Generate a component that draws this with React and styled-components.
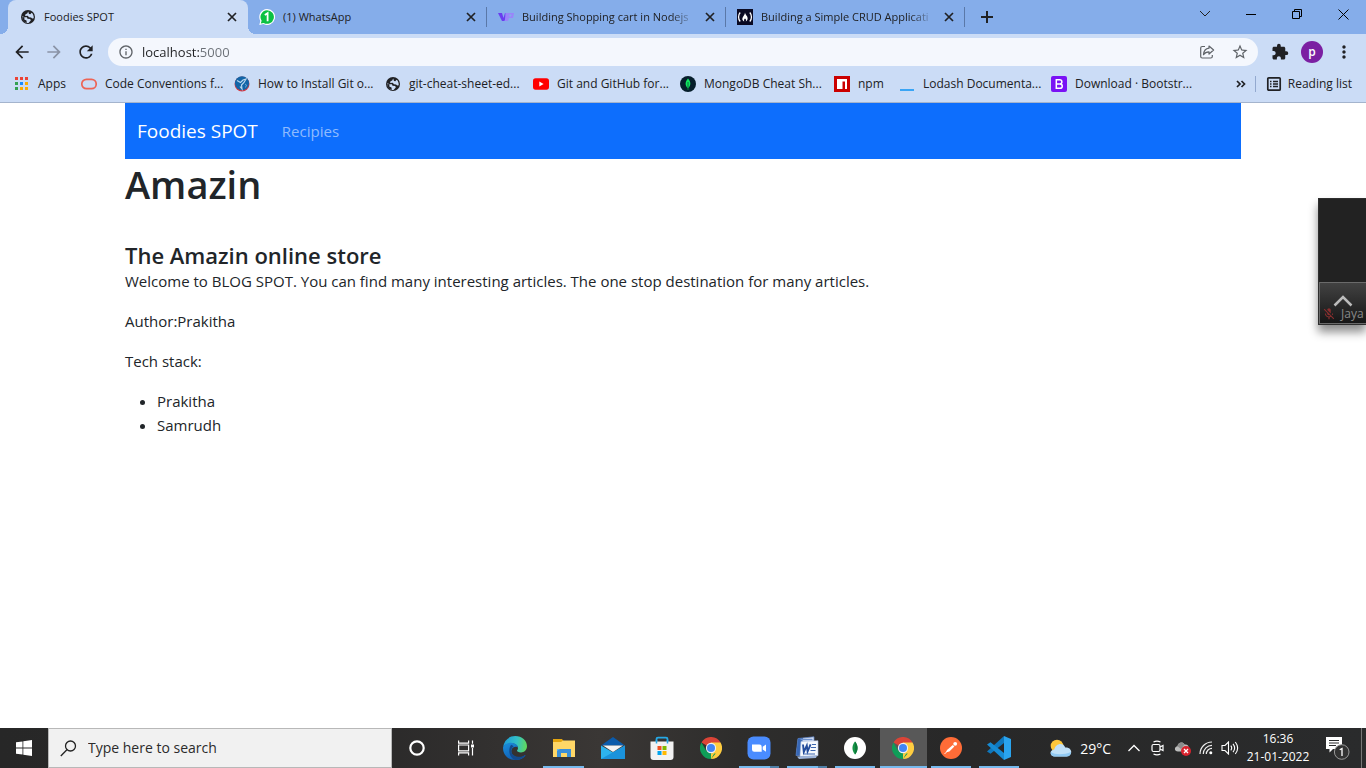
import React from "react";
import styled, { createGlobalStyle, css } from "styled-components";
import {
  MdArrowBack,
  MdArrowForward,
  MdRefresh,
  MdInfoOutline,
  MdStarBorder,
  MdExtension,
  MdMoreVert,
  MdMicOff,
} from "react-icons/md";

const GlobalStyle = createGlobalStyle`
  *, *::before, *::after { box-sizing: border-box; }
  body { margin: 0; background: #fff; font-family: "Open Sans", "Noto Sans", sans-serif; }
  button { border: 0; padding: 0; margin: 0; background: none; font: inherit; color: inherit; cursor: pointer; }
  a { color: inherit; text-decoration: none; }
  svg { display: block; flex: none; }
`;

const Screen = styled.div`
  display: flex;
  flex-direction: column;
  min-height: 100vh;
`;

/* ---------- Browser frame ---------- */

const BrowserFrame = styled.header`
  background: #cbdcf6;
  color: #202124;
  border-bottom: 1px solid #a4b4cd;
`;

const TabStrip = styled.div`
  display: flex;
  height: 34px;
  padding-left: 8px;
  background: #85adea;
`;

const Tab = styled.div`
  position: relative;
  display: flex;
  align-items: center;
  gap: 8px;
  flex: 0 1 239px;
  min-width: 0;
  height: 34px;
  padding: 0 9px 0 11px;
  line-height: 16px;

  &::after {
    content: "";
    position: absolute;
    right: 0;
    top: 7px;
    width: 1px;
    height: 20px;
    background: #5a78a8;
  }

  ${(p) =>
    p.$active &&
    css`
      background: #cbdcf6;
      border-radius: 8px 8px 0 0;
      flex-basis: 240px;
      padding-left: 12px;

      &::before,
      &::after {
        content: "";
        position: absolute;
        top: auto;
        bottom: 0;
        width: 8px;
        height: 8px;
      }
      &::before {
        left: -8px;
        background: radial-gradient(circle at 0 0, #85adea 8px, #cbdcf6 8px);
      }
      &::after {
        right: -8px;
        background: radial-gradient(circle at 100% 0, #85adea 8px, #cbdcf6 8px);
      }
    `}
`;

const TabTitle = styled.a`
  flex: 1;
  min-width: 0;
  overflow: hidden;
  white-space: nowrap;
  font-size: 11px;
  ${(p) =>
    p.$fade &&
    css`
      mask-image: linear-gradient(to right, #000 calc(100% - 24px), transparent);
    `}
`;

const TabClose = styled.button`
  display: grid;
  place-items: center;
  width: 14px;
  height: 16px;
`;

const NewTab = styled.button`
  display: grid;
  place-items: center;
  width: 44px;
  height: 34px;
`;

const WindowControls = styled.div`
  display: flex;
  margin-left: auto;
`;

const WindowButton = styled.button`
  display: grid;
  place-items: center;
  width: 46px;
  height: 28px;
`;

const Toolbar = styled.div`
  display: flex;
  align-items: center;
  height: 36px;
  padding: 0 6px;
`;

const ToolButton = styled.button`
  display: grid;
  place-items: center;
  width: 32px;
  height: 32px;
  color: ${(p) => (p.$muted ? "#8a93a6" : "#202124")};
`;

const AddressBar = styled.label`
  display: flex;
  align-items: center;
  flex: 1;
  min-width: 0;
  height: 28px;
  margin: 0 6px;
  padding: 0 9px 0 10px;
  gap: 8px;
  border-radius: 14px;
  background: #f4f7fd;
  color: #5f6368;
`;

const AddressInput = styled.input`
  flex: 1;
  min-width: 0;
  height: 20px;
  padding: 0;
  border: 0;
  outline: 0;
  font: 13px/20px "Open Sans", "Noto Sans", sans-serif;
  color: transparent;
  background: linear-gradient(to right, #202124 58px, #6a6f76 58px);
  background-clip: text;
  -webkit-background-clip: text;
`;

const Avatar = styled.button`
  width: 22px;
  height: 22px;
  margin: 0 5px;
  border-radius: 50%;
  background: #7b1fa2;
  color: #fff;
  font-size: 12px;
  font-weight: 600;
  line-height: 18px;
`;

const BookmarksBar = styled.nav`
  display: flex;
  align-items: center;
  height: 32px;
  padding: 0 14px 4px;
  font-size: 12px;
  line-height: 16px;
`;

const Bookmark = styled.a`
  display: flex;
  align-items: center;
  gap: 8px;
  flex: 0 0 ${(p) => p.$width}px;
  white-space: nowrap;
`;

const BookmarksEnd = styled.div`
  display: flex;
  align-items: center;
  margin-left: auto;
`;

const MoreBookmarks = styled.button`
  display: grid;
  place-items: center;
  width: 16px;
  height: 16px;
`;

const ReadingList = styled.button`
  display: flex;
  align-items: center;
  gap: 6px;
  height: 16px;
  margin-left: 6px;
  padding-left: 10px;
  border-left: 1px solid #93a9cf;
`;

/* ---------- Web page ---------- */

const Page = styled.main`
  flex: 1;
  background: #fff;
  color: #212529;
  font-size: 15px;
  line-height: 24px;
`;

const Container = styled.div`
  max-width: 1140px;
  margin: 0 auto;
  padding: 0 12px;
`;

const SiteNav = styled.nav`
  display: flex;
  align-items: center;
  gap: 24px;
  height: 56px;
  padding: 0 12px;
  background: #0d6efd;
`;

const Brand = styled.a`
  color: #fff;
  font-size: 19px;
`;

const NavLink = styled.a`
  color: rgba(255, 255, 255, 0.55);
  font-size: 15px;
`;

const Title = styled.h1`
  margin: 0 0 32px;
  font-size: 38px;
  line-height: 50px;
  font-weight: 600;
`;

const Subtitle = styled.h2`
  margin: 0;
  font-size: 22px;
  line-height: 28px;
  font-weight: 600;
`;

const Paragraph = styled.p`
  margin: 0 0 16px;
`;

const StackList = styled.ul`
  margin: 0;
  padding-left: 32px;
`;

/* ---------- Floating call window ---------- */

const CallWindow = styled.aside`
  position: absolute;
  top: 198px;
  right: 0;
  width: 48px;
  height: 127px;
  display: flex;
  flex-direction: column;
  justify-content: flex-end;
  background: #222;
  border: 1px solid #2e2e2e;
  border-right: 0;
  box-shadow: 0 7px 9px rgba(0, 0, 0, 0.45);
`;

const CallBar = styled.button`
  display: flex;
  flex-direction: column;
  align-items: center;
  height: 42px;
  padding-top: 12px;
  border: 1px solid #6a6a6a;
  border-right: 0;
  background: linear-gradient(#424242, #161616);
  overflow: hidden;
`;

const CallName = styled.span`
  display: flex;
  align-items: center;
  align-self: flex-start;
  gap: 5px;
  padding-left: 2px;
  color: #888;
  font-size: 12px;
  line-height: 14px;
`;

/* ---------- Taskbar ---------- */

const Taskbar = styled.footer`
  display: flex;
  height: 40px;
  color: #fff;
  background: linear-gradient(to right, #272727 0, #2b2a2a 28%, #3a3735 44%, #2e2d2c 54%, #282828 70%, #2a2b2c 100%);
`;

const TaskButton = styled.button`
  position: relative;
  display: grid;
  place-items: center;
  flex: none;
  width: ${(p) => p.$width || 48}px;
  height: 40px;

  ${(p) =>
    p.$active &&
    css`
      background: #585858;
      box-shadow: inset 1px 0 #2a2a2a;
    `}

  ${(p) =>
    p.$open &&
    css`
      &::after {
        content: "";
        position: absolute;
        bottom: 0;
        left: ${p.$active ? 1 : 4}px;
        right: ${p.$active ? 0 : 4}px;
        height: 2px;
        background: ${p.$multi ? "linear-gradient(to right, #76b9ed 31px, #4f7fa6 31px)" : "#76b9ed"};
      }
    `}
`;

const SearchBox = styled.label`
  display: flex;
  align-items: center;
  gap: 11px;
  flex: 0 1 344px;
  min-width: 120px;
  padding: 0 11px;
  background: #f1f1f1;
  border: 1px solid #b8b8b8;
  color: #222;
`;

const SearchInput = styled.input`
  flex: 1;
  min-width: 0;
  padding: 0;
  border: 0;
  outline: 0;
  background: none;
  font: 14px/20px "Open Sans", "Noto Sans", sans-serif;
  color: #222;

  &::placeholder {
    color: #2b2b2b;
    opacity: 1;
  }
`;

const Tray = styled.div`
  display: flex;
  align-items: center;
  margin-left: auto;
  padding-right: 4px;
`;

const Weather = styled.button`
  display: flex;
  align-items: center;
  gap: 8px;
  margin-right: 11px;
  font-size: 14px;
`;

const TrayButton = styled.button`
  display: grid;
  place-items: center;
  width: 24px;
  height: 40px;
`;

const Clock = styled.time`
  width: 72px;
  font-size: 12px;
  line-height: 18px;
  text-align: center;
  white-space: nowrap;
`;

const Notifications = styled.button`
  display: grid;
  place-items: center;
  width: 48px;
  height: 40px;
  border-right: 1px solid #777;
`;

/* ---------- Drawings ---------- */

const Globe = () => (
  <svg width="16" height="16" viewBox="0 0 16 16">
    <circle cx="8" cy="8" r="7" fill="#202124" />
    <path d="M2.300 7.200L4.700 8.300h2.200l.6 1.500 2.700.2.600 1.500-2.300 2.600C4.700 14.200 2.200 11.200 2.300 7.200z" fill="#cbdcf6" />
    <path d="M4.500 8.300l-.2 2.200 2.200 1 .3 2.500C3.600 13.300 2 10.600 2.300 8z" fill="#202124" />
    <path d="M8.200 2.400L7.200 4.500l-1.700.8-.4 1.700 2.600-.2 1.300 1.400 2 .2 1.300 1 1.400-.2C13.900 7 13.200 5 11.700 3.700L10.300 5.200 9 5z" fill="#cbdcf6" />
  </svg>
);

const Cross = () => (
  <svg width="10" height="10" viewBox="0 0 10 10" stroke="#202124" strokeWidth="1.7">
    <path d="M1 1l8 8M9 1L1 9" />
  </svg>
);

const WhatsApp = () => (
  <svg width="16" height="16" viewBox="0 0 16 16">
    <path d="M8 0a8 8 0 1 1-3.6 15.1L.3 16l1-4A8 8 0 0 1 8 0z" fill="#fff" />
    <path d="M8 1.2a6.8 6.8 0 1 1-3.3 12.7l-2.9.7.8-2.9A6.8 6.8 0 0 1 8 1.2z" fill="#0bc143" />
    <path d="M5.8 5.900l2.800-1.700v8" fill="none" stroke="#fff" strokeWidth="1.800" />
  </svg>
);

const VpLogo = () => (
  <svg width="16" height="16" viewBox="0 0 16 16">
    <path d="M0 4h4l1.500 5L7 4h2.600L6.400 12H4z" fill="#6a3df0" />
    <path d="M7.400 4h8.600l-1 5h-4l-1 3H7z" fill="#9a84fa" />
    <path d="M11.600 5.600h2l-.5 1.800h-2z" fill="#85adea" />
  </svg>
);

const CodeCamp = () => (
  <svg width="16" height="16" viewBox="0 0 16 16">
    <path d="M0 0h16v16H0z" fill="#0a0a23" />
    <path d="M3.200 3.500C1 6 1 10 3.200 12.500M12.800 3.500C15 6 15 10 12.800 12.500" fill="none" stroke="#fff" strokeWidth="1.300" />
    <path d="M8 3.600c.4 2.600 3 3.600 2.600 6.400-.2 1.300-1 2-1.800 2.400.5-1.300.2-2.200-.8-3-.9.800-1.200 1.700-.8 3C6 12 5.200 11 5.300 9.800 5.500 7.500 8 6.500 8 3.600z" fill="#fff" />
  </svg>
);

const AppsGrid = () => (
  <svg width="16" height="16" viewBox="0 0 16 16">
    {["#ea4335", "#ea4335", "#ea4335", "#34a053", "#1a8cff", "#fbac05", "#34a053", "#fbac05", "#fbac05"].map((c, i) => (
      <rect key={i} x={1 + (i % 3) * 5} y={1 + Math.floor(i / 3) * 5} width="3" height="3" fill={c} />
    ))}
  </svg>
);

const OracleRing = () => (
  <svg width="16" height="16" viewBox="0 0 16 16">
    <rect x="0.800" y="3.300" width="14.400" height="9.400" rx="4.700" fill="none" stroke="#ed6455" strokeWidth="1.700" />
  </svg>
);

const BlueGlobe = () => (
  <svg width="16" height="16" viewBox="0 0 16 16">
    <circle cx="8" cy="8" r="7.500" fill="#d33b45" />
    <circle cx="8" cy="7.300" r="7" fill="#1265a8" />
    <path d="M3 4.500l3.500 2L9 4l3-1-2 3.500L7.500 9l.5 4-2-2.500" fill="none" stroke="#b9d6ee" strokeWidth="1.200" />
    <path d="M11 8l1.500 1-1 2.500" fill="none" stroke="#6fa6d2" />
  </svg>
);

const YouTube = () => (
  <svg width="16" height="16" viewBox="0 0 16 16">
    <rect y="2.300" width="16" height="11.400" rx="2.600" fill="#f00" />
    <path d="M6.300 5.500v5L10.600 8z" fill="#fff" />
  </svg>
);

const MongoDark = () => (
  <svg width="16" height="16" viewBox="0 0 16 16">
    <circle cx="8" cy="8" r="8" fill="#061e2b" />
    <path d="M8 2.600c3 3.400 3.300 6.800 0 10-3.300-3.200-3-6.600 0-10z" fill="#10e660" />
    <path d="M8 6v8" stroke="#08713c" strokeWidth="1" />
  </svg>
);

const Npm = () => (
  <svg width="16" height="16" viewBox="0 0 16 16">
    <path d="M0 0h16v16H0z" fill="#cb0000" />
    <path d="M3 3h10v10h-2V5.500H8.500V13H3z" fill="#fff" />
  </svg>
);

const Lodash = () => (
  <svg width="16" height="16" viewBox="0 0 16 16">
    <path d="M1 13h14v2H1z" fill="#3aa5f5" />
  </svg>
);

const Bootstrap = () => (
  <svg width="16" height="16" viewBox="0 0 16 16">
    <rect width="16" height="16" rx="2" fill="#7a12f5" />
    <path d="M5.300 3.700h3.300c3 0 3 4 .3 4.200 3.300.2 3.100 4.400-.1 4.400H5.300zM5.300 7.900h3.500" fill="none" stroke="#fff" strokeWidth="1.500" />
  </svg>
);

const ShareIcon = () => (
  <svg width="16" height="16" viewBox="0 0 16 16" fill="none" stroke="#5f6368" strokeWidth="1.200" strokeLinejoin="round">
    <path d="M6 2.500H3.200Q1.700 2.500 1.700 4v8.500Q1.700 14 3.200 14h8.600q1.500 0 1.500-1.500V11" />
    <path d="M10 2l4.600 4L10 10V7.800C7.500 7.800 5.700 8.700 4.500 10.700 4.800 7 6.800 4.600 10 4.200z" />
  </svg>
);

const ReadingIcon = () => (
  <svg width="16" height="16" viewBox="0 0 16 16" fill="none" stroke="#202124">
    <rect x="1.800" y="1.800" width="12.400" height="12.400" rx="1" strokeWidth="1.700" />
    <path d="M4 5.500h1.500M4 8h1.500M4 10.500h1.500M7 5.500h5M7 8h5M7 10.500h5" strokeWidth="1.300" />
  </svg>
);

const WindowsLogo = () => (
  <svg width="16" height="16" viewBox="0 0 16 16" fill="#fff">
    <path d="M0 2.300L6.500 1.400v6.100H0zM7.300 1.300L16 0v7.500H7.300zM0 8.400h6.500v6.200L0 13.700zM7.300 8.400H16V16l-8.700-1.300z" />
  </svg>
);

const SearchIcon = () => (
  <svg width="17" height="17" viewBox="0 0 17 17" fill="none" stroke="#222" strokeWidth="1.300">
    <circle cx="10.500" cy="6" r="5" />
    <path d="M6.900 9.700L.8 16" />
  </svg>
);

const CortanaRing = () => (
  <svg width="16" height="16" viewBox="0 0 16 16">
    <circle cx="8" cy="8" r="6.700" fill="none" stroke="#fff" strokeWidth="2.200" />
  </svg>
);

const TaskView = () => (
  <svg width="16" height="16" viewBox="0 0 16 16" fill="none" stroke="#fff" strokeWidth="1.200">
    <path d="M.6.500v2.600h10V.500M.6 15.500v-2.600h10v2.600M.6 5h10v5.800H.6zM14.500.500v3.300M14.500 8v7.500" />
    <path d="M13 4.500h3v3h-3z" fill="#fff" stroke="none" />
  </svg>
);

const Edge = () => (
  <svg width="24" height="24" viewBox="0 0 24 24">
    <defs>
      <linearGradient id="edgeTop" x1="0" y1="0.500" x2="1" y2="0.600">
        <stop offset="0" stopColor="#1e9bd8" />
        <stop offset="0.550" stopColor="#33c1c8" />
        <stop offset="1" stopColor="#62d957" />
      </linearGradient>
      <linearGradient id="edgeLow" x1="0" y1="0" x2="0.500" y2="1">
        <stop offset="0" stopColor="#1b8fdb" />
        <stop offset="1" stopColor="#0f5eb5" />
      </linearGradient>
    </defs>
    <path d="M.1 11C1 4.500 6 0 12.200 0 19 0 24 4.800 24 10.300c0 3.700-2.800 6.100-6 6.100-2.500 0-4-.9-4-1.600 0-.6 1-1 1-2.800 0-2.500-2.700-4.700-6.400-4.700C4.500 7.300 1 9 .1 11z" fill="url(#edgeTop)" />
    <path d="M.1 11c1.200-2.700 4.500-4.400 8-4.300 3.700.1 6.700 2.200 6.900 5-1.200-1.700-5.500-1.500-6.500 2.300-.9 3.700 2.500 7.500 7.200 7.300 2.700-.1 4.600-1 6-2.100.4-.3.900.1.600.5A12 12 0 0 1 12 24C5 24-.6 18 .1 11z" fill="url(#edgeLow)" />
    <path d="M8.300 8.700C5.500 11.500 4.700 20.500 12 24c4 .1 7.800-1.500 10.200-4.500-5 2.800-14 1.300-13.900-4.800 0-1.800.8-3.100 2.300-4.200-.5-.9-1.300-1.500-2.300-1.800z" fill="#134a8c" />
  </svg>
);

const Explorer = () => (
  <svg width="24" height="24" viewBox="0 0 24 24">
    <path d="M1 3h9l1.500 2H23v3H1z" fill="#e5a50f" />
    <path d="M1 6h8l2-1.500h12V21H1z" fill="#ffd767" />
    <path d="M5 21v-8h14v8h-4v-4H9v4z" fill="#3a8fd9" />
    <path d="M9 17h6v3H9z" fill="#ffd767" />
    <path d="M5 15l3-2H5z" fill="#67b6ed" />
  </svg>
);

const Mail = () => (
  <svg width="24" height="24" viewBox="0 0 24 24">
    <path d="M0 9.500L12 1l12 8.500z" fill="#0b5bab" />
    <path d="M0 9.500l12 7 12-7V23H0z" fill="#2db4ef" />
    <path d="M0 23L24 9.500V23z" fill="#1b93dc" />
    <path d="M2 9.500h20l-10 6.500z" fill="#f3f4f5" />
  </svg>
);

const Store = () => (
  <svg width="24" height="24" viewBox="0 0 24 24">
    <path d="M6.500 7V3Q6.500 1.700 8 1.700h8q1.500 0 1.500 1.300v4" fill="none" stroke="#26a9e6" strokeWidth="1.800" />
    <path d="M.5 5.500h23V21q0 3-3 3h-17q-3 0-3-3z" fill="#f2f2f2" />
    <path d="M6.500 4v3.500M17.500 4v3.500" stroke="#26a9e6" strokeWidth="1.500" />
    <path d="M7.500 10h4v4h-4z" fill="#f25022" />
    <path d="M12.500 10h4v4h-4z" fill="#7fba00" />
    <path d="M7.500 15h4v4h-4z" fill="#00a4ef" />
    <path d="M12.500 15h4v4h-4z" fill="#ffb900" />
  </svg>
);

const Chrome = () => (
  <svg width="22" height="22" viewBox="0 0 24 24">
    <path d="M12 12L1.600 6A12 12 0 0 1 22.400 6z" fill="#db4437" />
    <path d="M12 12V6h10.400A12 12 0 0 1 12 24z" fill="#ffcd40" />
    <path d="M1.600 6l5.200 9L12 18h5.200L12 24A12 12 0 0 1 1.600 6z" fill="#0f9d58" />
    <path d="M12 18c3 0 4.500-1.500 5.200-3L12 24z" fill="#ffcd40" />
    <circle cx="12" cy="12" r="5.600" fill="#f1f1f1" />
    <circle cx="12" cy="12" r="4.400" fill="#4285f4" />
  </svg>
);

const Zoom = () => (
  <svg width="24" height="24" viewBox="0 0 24 24">
    <rect x="0.500" y="0.500" width="23" height="23" rx="6" fill="#4a8cff" />
    <path d="M5 8.500h7.500q2.200 0 2.200 2.200v5H7.200Q5 15.700 5 13.500zM15.700 10.800l3.300-2.300v7.200l-3.300-2.300z" fill="#fff" />
  </svg>
);

const Word = () => (
  <svg width="24" height="24" viewBox="0 0 24 24">
    <path d="M3 2.500L19 .8v18L1 19.500z" fill="#dfe8f7" stroke="#5b7dbd" strokeWidth="0.800" />
    <path d="M3 2.500L8 2 5 19.300l-4 .2z" fill="#3767b5" />
    <path d="M5.500 3.500h12" stroke="#6f93cf" strokeWidth="1.500" />
    <path d="M6 5.500l17-.8v15L5 20.500z" fill="#f6f9fd" stroke="#a8bbdd" strokeWidth="0.600" />
    <path d="M8 8.500l.8 7.500 3-6.500.8 6 3-7.200" fill="none" stroke="#234c9b" strokeWidth="1.900" />
    <path d="M17 8.500h4M16 11.500h5M15.500 14.500h5M9 18h11" stroke="#3c66b0" strokeWidth="1.200" />
    <path d="M2 20.500l20-1-1 2.500-17 1z" fill="#9db3d9" />
  </svg>
);

const Compass = () => (
  <svg width="22" height="22" viewBox="0 0 22 22">
    <circle cx="11" cy="11" r="11" fill="#fff" />
    <path d="M11 4.500c3.400 4.200 3.400 8.800 0 13-3.400-4.200-3.400-8.800 0-13z" fill="#159447" />
    <path d="M11 4.500c3.400 4.200 3.400 8.800 0 13z" fill="#0d7a39" />
  </svg>
);

const Postman = () => (
  <svg width="22" height="22" viewBox="0 0 22 22">
    <circle cx="11" cy="11" r="11" fill="#ff6c37" />
    <path d="M7 13l5.800-5 1.600 1.500-5 5-3.400.8z" fill="#fff" />
    <circle cx="15.200" cy="6.800" r="1.900" fill="#fff" />
    <path d="M4.500 17l4-4" stroke="#fff" strokeWidth="0.900" />
  </svg>
);

const VsCode = () => (
  <svg width="24" height="24" viewBox="0 0 24 24">
    <path d="M17 0l7 3v18l-7 3z" fill="#2aa4ee" />
    <path d="M17 0v7L3.500 17.800 0 15.500z" fill="#0f78be" />
    <path d="M17 24v-7L3.500 6.200 0 8.500z" fill="#168bd4" />
  </svg>
);

const WeatherIcon = () => (
  <svg width="22" height="18" viewBox="0 0 22 18">
    <circle cx="7" cy="7" r="6.300" fill="#fdc73a" />
    <path d="M5 17.500c-5.500 0-6-6.500-.8-7C5.500 4.500 13 2.500 15.300 8.500 23 8 23 17.500 16.500 17.500z" fill="#bfe0f7" />
    <path d="M5 17.500c-3.500 0-4.800-2.500-4-4.500 4 3 13 3 20 0 0 2.500-1.500 4.500-4.500 4.500z" fill="#90c9f2" />
  </svg>
);

const TrayChevron = () => (
  <svg width="12" height="8" viewBox="0 0 12 8" fill="none" stroke="#fff" strokeWidth="1.300">
    <path d="M.5 7L6 1.500 11.500 7" />
  </svg>
);

const MeetNow = () => (
  <svg width="14" height="16" viewBox="0 0 14 16" fill="none" stroke="#fff" strokeWidth="1.200">
    <rect x="1" y="4.500" width="8" height="7" rx="1.500" />
    <path d="M9 7l3-1.500v5L9 9M2.500 2Q6 .2 9.500 2M2.500 14Q6 15.800 9.500 14" />
  </svg>
);

const CloudError = () => (
  <svg width="17" height="16" viewBox="0 0 17 16">
    <path d="M4 11.500c-4 0-4-5-.5-5.300C4 2 9 1.500 10.500 4.500 13.500 4 15 6 14.500 8v3.500z" fill="#bcbcbc" />
    <path d="M3.500 6.200C4 2 9 1.500 10.500 4.500L7 9z" fill="#8c8c8c" />
    <circle cx="12" cy="11" r="5" fill="#d9232e" />
    <path d="M10 9l4 4M14 9l-4 4" stroke="#fff" strokeWidth="1.300" />
  </svg>
);

const Wifi = () => (
  <svg width="14" height="14" viewBox="0 0 14 14" fill="none" stroke="#eee" strokeWidth="1.200">
    <path d="M1 13A12 12 0 0 1 13 1M4.300 13A8.700 8.700 0 0 1 13 4.300M7.300 13A5.700 5.700 0 0 1 13 7.300" />
    <circle cx="11.800" cy="11.800" r="1.500" fill="#fff" stroke="none" />
  </svg>
);

const Speaker = () => (
  <svg width="18" height="14" viewBox="0 0 18 14" fill="none" stroke="#fff" strokeWidth="1.100">
    <path d="M1 4.500h3L7.500 1v12L4 9.500H1zM9.800 4.700q1.800 2.300 0 4.600M12 2.800q3.300 4.200 0 8.400M14.300 1q4.700 6 0 12" />
  </svg>
);

const Note = () => (
  <svg width="24" height="24" viewBox="0 0 24 24">
    <path d="M0 1h16v12H7l-3.500 3.500V13H0z" fill="#fff" />
    <path d="M3 4.500h10M3 7h10M3 9.500h7" stroke="#2a2b2c" strokeWidth="1" />
    <circle cx="15.700" cy="16" r="7.300" fill="#333" stroke="#999" strokeWidth="1" />
    <path d="M13.700 13.800l2.300-1.300v7.500" fill="none" stroke="#fff" strokeWidth="1.300" />
  </svg>
);

/* ---------- Content ---------- */

const tabs = [
  { title: "Foodies SPOT", Icon: Globe, active: true },
  { title: "(1) WhatsApp", Icon: WhatsApp },
  { title: "Building Shopping cart in Nodejs", Icon: VpLogo, fade: true },
  { title: "Building a Simple CRUD Applicati", Icon: CodeCamp, fade: true },
];

const bookmarks = [
  { label: "Apps", Icon: AppsGrid, width: 67 },
  { label: "Code Conventions f...", Icon: OracleRing, width: 153 },
  { label: "How to Install Git o...", Icon: BlueGlobe, width: 151 },
  { label: "git-cheat-sheet-ed...", Icon: Globe, width: 148 },
  { label: "Git and GitHub for...", Icon: YouTube, width: 147 },
  { label: "MongoDB Cheat Sh...", Icon: MongoDark, width: 154 },
  { label: "npm", Icon: Npm, width: 65 },
  { label: "Lodash Documenta...", Icon: Lodash, width: 152 },
  { label: "Download · Bootstr...", Icon: Bootstrap, width: 151 },
];

const pinned = [
  { name: "Cortana", Icon: CortanaRing },
  { name: "Task View", Icon: TaskView },
  { name: "Edge", Icon: Edge },
  { name: "File Explorer", Icon: Explorer, open: true },
  { name: "Mail", Icon: Mail },
  { name: "Store", Icon: Store },
  { name: "Chrome", Icon: Chrome },
];

const running = [
  { name: "Zoom", Icon: Zoom, multi: true },
  { name: "Word", Icon: Word, multi: true },
  { name: "MongoDB Compass", Icon: Compass },
  { name: "Chrome window", Icon: Chrome, active: true },
  { name: "Postman", Icon: Postman },
  { name: "Visual Studio Code", Icon: VsCode },
];

function Browser() {
  return (
    <BrowserFrame>
      <TabStrip>
        {tabs.map(({ title, Icon, active, fade }) => (
          <Tab key={title} $active={active}>
            <Icon />
            <TabTitle href="#" $fade={fade}>{title}</TabTitle>
            <TabClose aria-label={`Close ${title}`}><Cross /></TabClose>
          </Tab>
        ))}
        <NewTab aria-label="New tab">
          <svg width="12" height="12" viewBox="0 0 12 12" stroke="#202124" strokeWidth="2">
            <path d="M6 0v12M0 6h12" />
          </svg>
        </NewTab>
        <WindowControls>
          <WindowButton aria-label="Search tabs">
            <svg width="12" height="8" viewBox="0 0 12 8" fill="none" stroke="#222"><path d="M1 1l5 5 5-5" /></svg>
          </WindowButton>
          <WindowButton aria-label="Minimize">
            <svg width="10" height="10" viewBox="0 0 10 10" stroke="#000"><path d="M0 5.500h10" /></svg>
          </WindowButton>
          <WindowButton aria-label="Restore">
            <svg width="10" height="10" viewBox="0 0 10 10" fill="none" stroke="#000">
              <path d="M.5 2.500h7v7h-7zM2.500 2.500v-2h7v7h-2" />
            </svg>
          </WindowButton>
          <WindowButton aria-label="Close">
            <svg width="11" height="11" viewBox="0 0 11 11" stroke="#000"><path d="M.5.500l10 10M10.500.500l-10 10" /></svg>
          </WindowButton>
        </WindowControls>
      </TabStrip>
      <Toolbar>
        <ToolButton aria-label="Back"><MdArrowBack size={20} /></ToolButton>
        <ToolButton aria-label="Forward" $muted><MdArrowForward size={20} /></ToolButton>
        <ToolButton aria-label="Reload"><MdRefresh size={20} /></ToolButton>
        <AddressBar>
          <MdInfoOutline size={16} />
          <AddressInput aria-label="Address" defaultValue="localhost:5000" />
          <ToolButton as="span"><ShareIcon /></ToolButton>
          <MdStarBorder size={18} />
        </AddressBar>
        <ToolButton aria-label="Extensions"><MdExtension size={18} /></ToolButton>
        <Avatar aria-label="Profile">p</Avatar>
        <ToolButton aria-label="Menu"><MdMoreVert size={20} /></ToolButton>
      </Toolbar>
      <BookmarksBar>
        {bookmarks.map(({ label, Icon, width }) => (
          <Bookmark key={label} href="#" $width={width}>
            <Icon />
            {label}
          </Bookmark>
        ))}
        <BookmarksEnd>
          <MoreBookmarks aria-label="More bookmarks">
            <svg width="10" height="8" viewBox="0 0 10 8" fill="none" stroke="#202124" strokeWidth="1.700">
              <path d="M1 1l3 3-3 3M5.500 1l3 3-3 3" />
            </svg>
          </MoreBookmarks>
          <ReadingList><ReadingIcon />Reading list</ReadingList>
        </BookmarksEnd>
      </BookmarksBar>
    </BrowserFrame>
  );
}

export default function App() {
  return (
    <Screen>
      <GlobalStyle />
      <Browser />
      <Page>
        <Container>
          <SiteNav>
            <Brand href="#">Foodies SPOT</Brand>
            <NavLink href="#">Recipies</NavLink>
          </SiteNav>
          <Title>Amazin</Title>
          <Subtitle>The Amazin online store</Subtitle>
          <Paragraph>
            Welcome to BLOG SPOT. You can find many interesting articles. The one stop destination for many articles.
          </Paragraph>
          <Paragraph>Author:Prakitha</Paragraph>
          <Paragraph>Tech stack:</Paragraph>
          <StackList>
            <li>Prakitha</li>
            <li>Samrudh</li>
          </StackList>
        </Container>
      </Page>
      <CallWindow>
        <CallBar>
          <svg width="20" height="12" viewBox="0 0 20 12" fill="none" stroke="#bbb" strokeWidth="2.500">
            <path d="M1.500 10.500L10 2l8.500 8.500" />
          </svg>
          <CallName><MdMicOff size={14} color="#8c2f2f" />Jaya</CallName>
        </CallBar>
      </CallWindow>
      <Taskbar>
        <TaskButton aria-label="Start"><WindowsLogo /></TaskButton>
        <SearchBox>
          <SearchIcon />
          <SearchInput aria-label="Search" placeholder="Type here to search" />
        </SearchBox>
        {pinned.map(({ name, Icon, open }) => (
          <TaskButton key={name} aria-label={name} $width={49} $open={open}><Icon /></TaskButton>
        ))}
        {running.map(({ name, Icon, active, multi }) => (
          <TaskButton key={name} aria-label={name} $open $active={active} $multi={multi}><Icon /></TaskButton>
        ))}
        <Tray>
          <Weather><WeatherIcon />29°C</Weather>
          <TrayButton aria-label="Show hidden icons"><TrayChevron /></TrayButton>
          <TrayButton aria-label="Meet Now"><MeetNow /></TrayButton>
          <TrayButton aria-label="OneDrive"><CloudError /></TrayButton>
          <TrayButton aria-label="Network"><Wifi /></TrayButton>
          <TrayButton aria-label="Volume"><Speaker /></TrayButton>
          <Clock>16:36<br />21-01-2022</Clock>
          <Notifications aria-label="Notifications"><Note /></Notifications>
        </Tray>
      </Taskbar>
    </Screen>
  );
}
